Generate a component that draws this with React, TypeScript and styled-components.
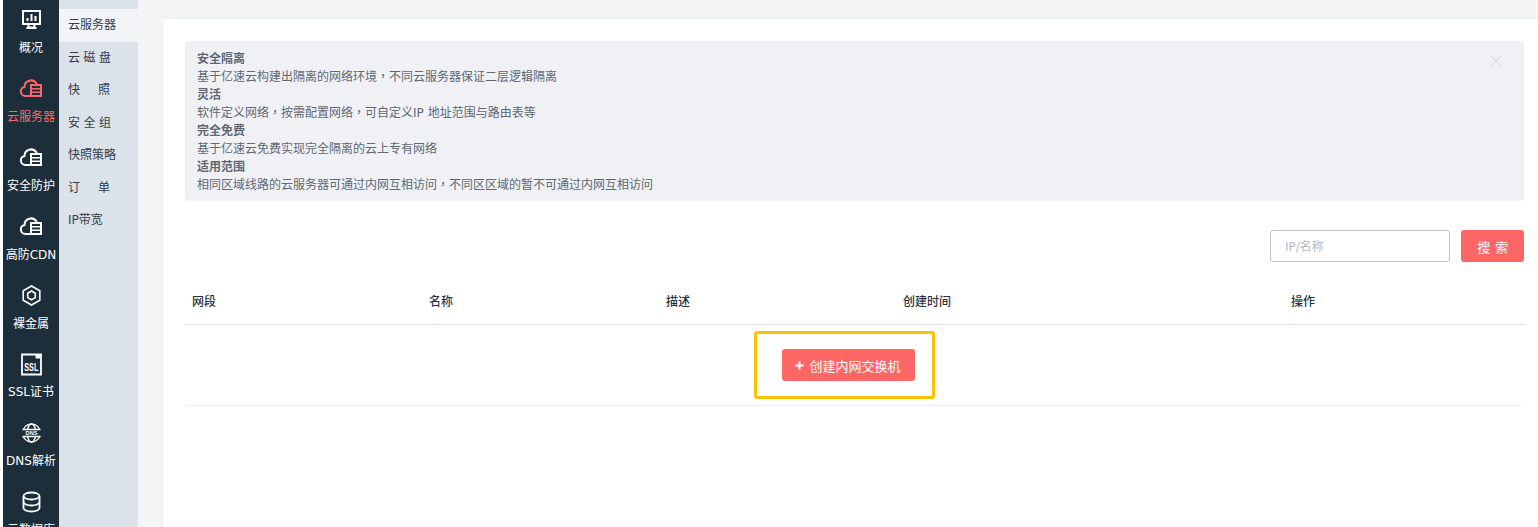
import React from "react";
import styled, { createGlobalStyle } from "styled-components";

const Global = createGlobalStyle`
  html, body { margin: 0; padding: 0; height: 100%; background: #fff; overflow: hidden; }
  body { font-family: "DejaVu Sans", "Noto Sans CJK SC", sans-serif; font-size: 12px; }
  * { box-sizing: border-box; }
`;

const Page = styled.div`
  display: flex;
  height: 527px;
  width: 1538px;
  overflow: hidden;
  padding-left: 3px;
`;

const MainNav = styled.nav`
  width: 56px;
  flex: none;
  height: 527px;
  overflow: hidden;
  background: #1c2e3a;
  padding-top: 3px;
`;

const NavItem = styled.div<{ $active?: boolean }>`
  height: 68.9px;
  display: flex;
  flex-direction: column;
  align-items: center;
  color: ${(p) => (p.$active ? "#ff6666" : "#fff")};
  font-size: 12px;
  line-height: 16px;
  white-space: nowrap;
  svg { width: 30px; height: 30px; display: block; flex: none; }
`;

const NavLabel = styled.span`
  margin-top: 7px;
`;

const SubNav = styled.nav`
  width: 79px;
  flex: none;
  background: #dbe2ea;
  padding-top: 9px;
`;

const SubItem = styled.div<{ $active?: boolean; $spacing?: number }>`
  height: 32.5px;
  line-height: 33.5px;
  padding-left: 9px;
  color: #333c48;
  font-size: 12px;
  white-space: nowrap;
  letter-spacing: ${(p) => p.$spacing ?? 0}px;
  background: ${(p) => (p.$active ? "#f2f4f7" : "transparent")};
`;

const Content = styled.main`
  flex: 1;
  background: #f4f5f7;
  padding: 19px 0 0 25px;
  min-width: 0;
`;

const Panel = styled.section`
  background: #fff;
  height: 100%;
  padding: 22px 14px 0 22px;
  box-shadow: 0 0 4px rgba(0, 0, 0, 0.05);
`;

const Notice = styled.div`
  position: relative;
  height: 160px;
  background: #f0f1f5;
  border-radius: 4px;
  padding: 9px 12px;
  font-size: 12px;
  line-height: 18px;
  color: #5f6873;
`;

const NoticeTitle = styled.div`
  font-weight: 700;
`;

const Comma = styled.span`
  font-family: "Noto Sans CJK TC", sans-serif;
  line-height: 0;
`;

const NoticeClose = styled.span`
  position: absolute;
  top: 13px;
  right: 21px;
  width: 14px;
  height: 14px;
  color: #dfe2e8;
  svg { display: block; width: 14px; height: 14px; }
`;

const SearchBar = styled.div`
  display: flex;
  justify-content: flex-end;
  gap: 11px;
  margin-top: 29px;
`;

const SearchInput = styled.input`
  width: 180px;
  height: 32px;
  border: 1px solid #bcc4d4;
  border-radius: 3px;
  padding: 2px 14px 0;
  font: 12px "DejaVu Sans", "Noto Sans CJK SC", sans-serif;
  outline: none;
  &::placeholder { color: #b2b8c4; opacity: 1; }
`;

const SearchButton = styled.button`
  width: 63px;
  height: 32px;
  border: 0;
  border-radius: 3px;
  background: #ff6666;
  color: #fff;
  font: 13px "DejaVu Sans", "Noto Sans CJK SC", sans-serif;
  letter-spacing: 0.5px;
  padding: 0 0 0 1px;
`;

const Table = styled.div`
  margin-top: 15px;
`;

const HeaderRow = styled.div`
  display: grid;
  grid-template-columns: 237px 237px 237px 388px 1fr;
  height: 48px;
  align-items: center;
  padding-left: 7px;
  border-bottom: 1px solid #dde2ea;
  font-size: 12px;
  color: #2a333d;
  font-weight: 500;
`;

const EmptyRow = styled.div`
  height: 81px;
  display: flex;
  justify-content: center;
  padding: 6px 21px 0 0;
  border-bottom: 1px solid #eff1f4;
`;

const Highlight = styled.div`
  width: 181px;
  height: 68px;
  border: 3px solid #ffc000;
  border-radius: 3px;
  display: flex;
  align-items: center;
  padding-left: 25px;
`;

const CreateButton = styled.button`
  width: 133px;
  height: 32px;
  border: 0;
  border-radius: 3px;
  background: #ff6666;
  color: #fff;
  display: flex;
  align-items: center;
  justify-content: center;
  gap: 5px;
  padding: 0;
  font: 13px "DejaVu Sans", "Noto Sans CJK SC", sans-serif;
`;

const PlusGlyph = styled.svg`
  width: 9px;
  height: 9px;
  display: block;
`;

const CloudList = () => (
  <svg viewBox="0 0 30 30" fill="none" stroke="currentColor" strokeWidth="2">
    <path d="M13.500 24H9.500a4.600 4.600 0 0 1-1-9.100A6.500 6.500 0 0 1 20.500 11.500" strokeLinecap="round" />
    <rect x="15" y="13" width="10" height="11" />
    <path d="M15 16.700h10M15 20.300h10" strokeWidth="1.600" />
  </svg>
);

const Monitor = () => (
  <svg viewBox="0 0 30 30" fill="none" stroke="currentColor" strokeWidth="2">
    <rect x="7" y="8" width="17" height="13" />
    <path d="M12.500 22v2.500h6V22M10.500 25h10" />
    <path d="M11.500 18v-3M15.500 18v-7M19.500 18v-5" />
  </svg>
);

const Hexagon = () => (
  <svg viewBox="0 0 30 30" fill="none" stroke="currentColor" strokeWidth="1.600">
    <path d="M15.500 7l8.300 4.700v9.600l-8.300 4.700-8.300-4.700v-9.600z" />
    <path d="M15.500 12l3.800 2.200v4.400l-3.800 2.200-3.800-2.200v-4.400z" />
  </svg>
);

const SslDoc = () => (
  <svg viewBox="0 0 30 30" fill="none" stroke="currentColor" strokeWidth="1.800">
    <path d="M6 7.500h19v20H6z" />
    <rect x="19.500" y="7.500" width="4.500" height="4" fill="currentColor" stroke="none" />
    <text x="15.300" y="23.500" textAnchor="middle" textLength="14" lengthAdjust="spacingAndGlyphs" fill="currentColor" stroke="none" fontSize="10" fontWeight="700" fontFamily="Liberation Sans, sans-serif">SSL</text>
  </svg>
);

const DnsGlobe = () => (
  <svg viewBox="0 0 30 30" fill="none" stroke="currentColor" strokeWidth="1.300">
    <circle cx="15.500" cy="17" r="9" />
    <ellipse cx="15.500" cy="17" rx="4.300" ry="9" />
    <rect x="5" y="13.500" width="21" height="7" fill="#1c2e3a" stroke="none" />
    <path d="M6.500 13.500h18M6.500 20.500h18" />
    <text x="15.500" y="19.200" textAnchor="middle" fill="currentColor" stroke="none" fontSize="5.600" fontWeight="700" fontFamily="Liberation Sans, sans-serif">DNS</text>
  </svg>
);

const Database = () => (
  <svg viewBox="0 0 30 30" fill="none" stroke="currentColor" strokeWidth="1.800">
    <ellipse cx="15.500" cy="11" rx="8" ry="3.500" />
    <path d="M7.500 11v12c0 2 3.600 3.500 8 3.500s8-1.500 8-3.500V11" />
    <path d="M7.500 17c0 2 3.600 3.500 8 3.500s8-1.500 8-3.500" />
  </svg>
);

const nav = [
  { label: "概况", icon: <Monitor /> },
  { label: "云服务器", icon: <CloudList />, active: true },
  { label: "安全防护", icon: <CloudList /> },
  { label: "高防CDN", icon: <CloudList /> },
  { label: "裸金属", icon: <Hexagon /> },
  { label: "SSL证书", icon: <SslDoc /> },
  { label: "DNS解析", icon: <DnsGlobe /> },
  { label: "云数据库", icon: <Database /> },
];

const sub = [
  { label: "云服务器", active: true },
  { label: "云磁盘", spacing: 3.5 },
  { label: "快照", spacing: 18 },
  { label: "安全组", spacing: 3.5 },
  { label: "快照策略" },
  { label: "订单", spacing: 18 },
  { label: "IP带宽" },
];

const notes = [
  ["安全隔离", "基于亿速云构建出隔离的网络环境，不同云服务器保证二层逻辑隔离"],
  ["灵活", "软件定义网络，按需配置网络，可自定义IP 地址范围与路由表等"],
  ["完全免费", "基于亿速云免费实现完全隔离的云上专有网络"],
  ["适用范围", "相同区域线路的云服务器可通过内网互相访问，不同区区域的暂不可通过内网互相访问"],
];

const withCommas = (text: string) =>
  text.split("，").map((part, i) => (
    <React.Fragment key={i}>
      {i > 0 && <Comma>，</Comma>}
      {part}
    </React.Fragment>
  ));

export default function App() {
  return (
    <Page>
      <Global />
      <MainNav>
        {nav.map((n) => (
          <NavItem key={n.label} $active={n.active}>
            {n.icon}
            <NavLabel>{n.label}</NavLabel>
          </NavItem>
        ))}
      </MainNav>
      <SubNav>
        {sub.map((s) => (
          <SubItem key={s.label} $active={s.active} $spacing={s.spacing}>
            {s.label}
          </SubItem>
        ))}
      </SubNav>
      <Content>
        <Panel>
          <Notice>
            {notes.map(([t, d]) => (
              <React.Fragment key={t}>
                <NoticeTitle>{t}</NoticeTitle>
                <div>{withCommas(d)}</div>
              </React.Fragment>
            ))}
            <NoticeClose>
              <svg viewBox="0 0 14 14" fill="none" stroke="currentColor" strokeWidth="1.300">
                <path d="M1 1l12 12M13 1L1 13" />
              </svg>
            </NoticeClose>
          </Notice>
          <SearchBar>
            <SearchInput placeholder="IP/名称" />
            <SearchButton>搜 索</SearchButton>
          </SearchBar>
          <Table>
            <HeaderRow>
              <span>网段</span>
              <span>名称</span>
              <span>描述</span>
              <span>创建时间</span>
              <span>操作</span>
            </HeaderRow>
            <EmptyRow>
              <Highlight>
                <CreateButton>
                  <PlusGlyph viewBox="0 0 9 9" fill="none" stroke="currentColor" strokeWidth="2">
                    <path d="M4.500 0.500v8M0.500 4.500h8" />
                  </PlusGlyph>
                  创建内网交换机
                </CreateButton>
              </Highlight>
            </EmptyRow>
          </Table>
        </Panel>
      </Content>
    </Page>
  );
}
